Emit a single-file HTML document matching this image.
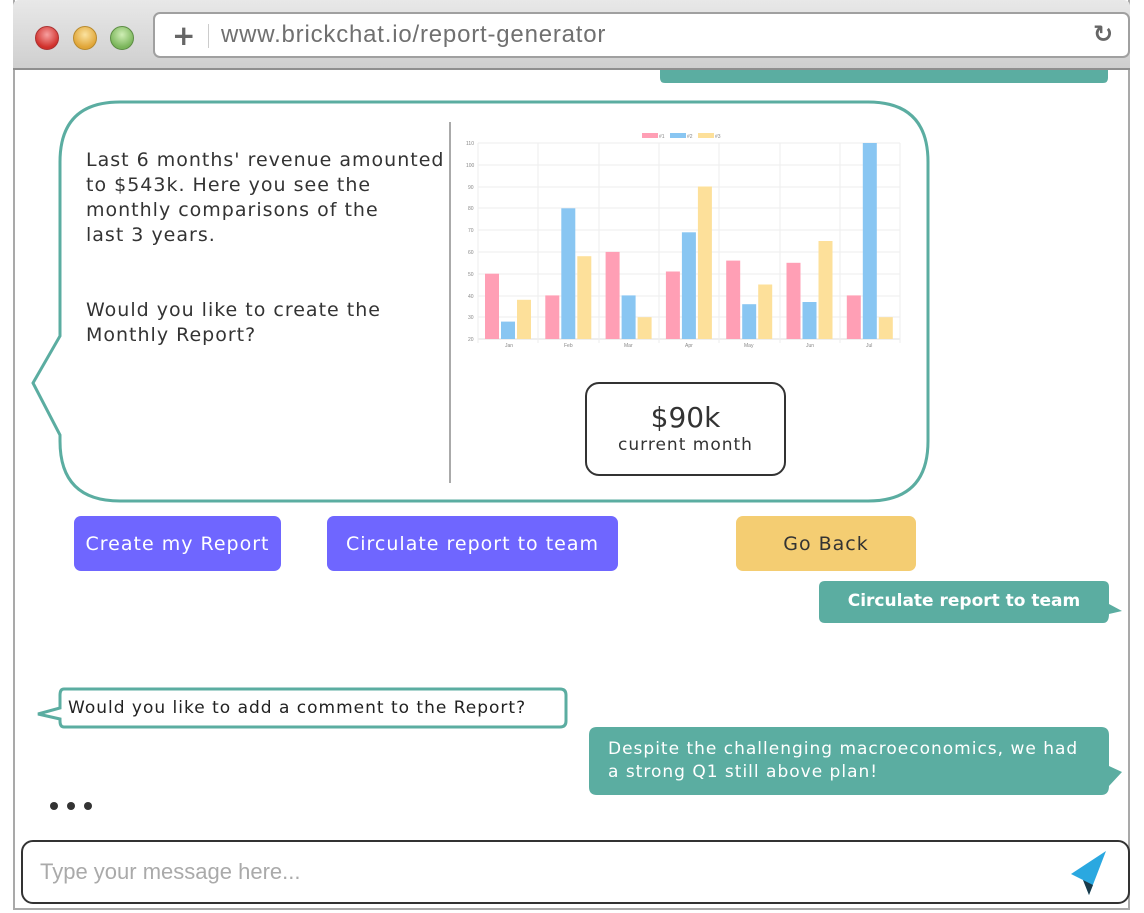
<!DOCTYPE html>
<html><head><meta charset="utf-8"><style>
body{margin:0;width:1144px;height:913px;overflow:hidden;background:#fff;font-family:"DejaVu Sans","Liberation Sans",sans-serif;position:relative}
.a{position:absolute}
.btn{position:absolute;border-radius:7px;color:#fff;font-size:19px;display:flex;align-items:center;justify-content:center;letter-spacing:1px}
</style></head><body>
<div class="a" style="left:13px;top:0;width:1117px;height:910px;border:2px solid #a9a9a9;border-top:none;box-sizing:border-box"></div>
<div class="a" style="left:13px;top:0;width:1117px;height:70px;background:linear-gradient(#e8e8e8,#cfcfcf);border-bottom:2px solid #8f8f8f;box-sizing:border-box;border-radius:6px 6px 0 0"></div>
<div class="a" style="left:35px;top:26px;width:22px;height:22px;border-radius:50%;background:radial-gradient(circle at 50% 35%,#f7a0a0,#d0302b 70%);border:1px solid #a33"></div>
<div class="a" style="left:73px;top:26px;width:22px;height:22px;border-radius:50%;background:radial-gradient(circle at 50% 35%,#fbe3a0,#e0a537 70%);border:1px solid #b88a2e"></div>
<div class="a" style="left:110px;top:26px;width:22px;height:22px;border-radius:50%;background:radial-gradient(circle at 50% 35%,#cfeeb5,#7ab55a 70%);border:1px solid #5d8d45"></div>
<div class="a" style="left:153px;top:12px;width:977px;height:46px;background:#fff;border:2px solid #a0a0a0;border-radius:7px;box-sizing:border-box"></div>
<div class="a" style="left:172px;top:19px;font-size:28px;color:#666;font-weight:bold">+</div>
<div class="a" style="left:208px;top:24px;width:1px;height:24px;background:#ccc"></div>
<div class="a" style="left:221px;top:21px;font-size:24px;letter-spacing:0.8px;color:#707070;font-family:'Liberation Sans',sans-serif">www.brickchat.io/report-generator</div>
<div class="a" style="left:1093px;top:20px;font-size:24px;color:#666;font-weight:bold">↻</div>

<svg class="a" style="left:0;top:0" width="1144" height="913">
<path d="M660 70 H1108 V78 Q1108 83 1103 83 H665 Q660 83 660 78 Z" fill="#5bada1"/>
<path d="M120 102 H868 Q928 102 928 162 V441 Q928 501 868 501 H120 Q60 501 60 441 V435 L33 383 L60 336 V162 Q60 102 120 102 Z" fill="#fff" stroke="#5bada1" stroke-width="3"/>
<line x1="450" y1="122" x2="450" y2="483" stroke="#555" stroke-width="1"/>
<g stroke="#eee" stroke-width="1">
<line x1="478" y1="143" x2="900" y2="143"/><line x1="478" y1="165" x2="900" y2="165"/><line x1="478" y1="187" x2="900" y2="187"/><line x1="478" y1="208" x2="900" y2="208"/><line x1="478" y1="230" x2="900" y2="230"/><line x1="478" y1="252" x2="900" y2="252"/><line x1="478" y1="274" x2="900" y2="274"/><line x1="478" y1="296" x2="900" y2="296"/><line x1="478" y1="317" x2="900" y2="317"/><line x1="478" y1="339" x2="900" y2="339" stroke="#ddd"/>
<line x1="478" y1="143" x2="478" y2="343"/><line x1="538" y1="143" x2="538" y2="343"/><line x1="599" y1="143" x2="599" y2="343"/><line x1="659" y1="143" x2="659" y2="343"/><line x1="719" y1="143" x2="719" y2="343"/><line x1="780" y1="143" x2="780" y2="343"/><line x1="840" y1="143" x2="840" y2="343"/><line x1="900" y1="143" x2="900" y2="343"/>
</g>
<g fill="#ff9fb5">
<rect x="485" y="273.7" width="14" height="65.3"/><rect x="545.3" y="295.4" width="14" height="43.6"/><rect x="605.6" y="251.9" width="14" height="87.1"/><rect x="665.9" y="271.5" width="14" height="67.5"/><rect x="726.2" y="260.6" width="14" height="78.4"/><rect x="786.5" y="262.8" width="14" height="76.2"/><rect x="846.8" y="295.4" width="14" height="43.6"/>
</g>
<g fill="#89c6f2">
<rect x="501" y="321.6" width="14" height="17.4"/><rect x="561.3" y="208.3" width="14" height="130.7"/><rect x="621.6" y="295.4" width="14" height="43.6"/><rect x="681.9" y="232.3" width="14" height="106.7"/><rect x="742.2" y="304.2" width="14" height="34.8"/><rect x="802.5" y="302" width="14" height="37"/><rect x="862.8" y="143" width="14" height="196"/>
</g>
<g fill="#fde09a">
<rect x="517" y="299.8" width="14" height="39.2"/><rect x="577.3" y="256.2" width="14" height="82.8"/><rect x="637.6" y="317.2" width="14" height="21.8"/><rect x="697.9" y="186.5" width="14" height="152.5"/><rect x="758.2" y="284.5" width="14" height="54.5"/><rect x="818.5" y="241" width="14" height="98"/><rect x="878.8" y="317.2" width="14" height="21.8"/>
</g>
<rect x="642" y="133" width="16" height="5" fill="#ff9fb5"/><rect x="670" y="133" width="16" height="5" fill="#89c6f2"/><rect x="698" y="133" width="16" height="5" fill="#fde09a"/>
<g font-size="5" fill="#888" font-family="Liberation Sans">
<text x="659" y="138">#1</text><text x="687" y="138">#2</text><text x="715" y="138">#3</text>
<text x="466" y="145">110</text><text x="466" y="167">100</text><text x="468" y="189">90</text><text x="468" y="210">80</text><text x="468" y="232">70</text><text x="468" y="254">60</text><text x="468" y="276">50</text><text x="468" y="298">40</text><text x="468" y="319">30</text><text x="468" y="341">20</text>
<text x="505" y="347">Jan</text><text x="564" y="347">Feb</text><text x="624" y="347">Mar</text><text x="685" y="347">Apr</text><text x="744" y="347">May</text><text x="806" y="347">Jun</text><text x="866" y="347">Jul</text>
</g>
<path d="M819 587 Q819 581 825 581 H1103 Q1109 581 1109 587 V604 L1122 611 L1109 614 Q1109 623 1103 623 H825 Q819 623 819 617 Z" fill="#5bada1"/>
<path d="M64 689 H560 Q566 689 566 695 V721 Q566 727 560 727 H64 Q60 727 60 721 V719 L38 714 L60 708 V695 Q60 689 64 689 Z" fill="#fff" stroke="#5bada1" stroke-width="3"/>
<path d="M597 727 H1101 Q1109 727 1109 735 V766 L1122 772 L1109 786 Q1109 795 1101 795 H597 Q589 795 589 787 V735 Q589 727 597 727 Z" fill="#5bada1"/>
<circle cx="54" cy="806" r="4" fill="#333"/><circle cx="71" cy="806" r="4" fill="#333"/><circle cx="88" cy="806" r="4" fill="#333"/>
<path d="M1106 851 L1071 874 L1083 880 L1089 895 Z" fill="#2aa8e0"/>
<path d="M1083 880 L1089 895 L1093 885 Z" fill="#1a3a4a"/>
</svg>

<div class="a" style="left:86px;top:148px;font-size:19px;line-height:25px;letter-spacing:1px;color:#333">Last 6 months' revenue amounted<br>to $543k. Here you see the<br>monthly comparisons of the<br>last 3 years.<br><br><br>Would you like to create the<br>Monthly Report?</div>
<div class="a" style="left:585px;top:382px;width:201px;height:94px;border:2px solid #333;border-radius:14px;box-sizing:border-box;text-align:center;color:#333"><div style="font-size:28px;margin-top:18px;line-height:32px">$90k</div><div style="font-size:17px;line-height:22px;letter-spacing:1px">current month</div></div>
<div class="btn" style="left:74px;top:516px;width:207px;height:55px;background:#6f66ff">Create my Report</div>
<div class="btn" style="left:327px;top:516px;width:291px;height:55px;background:#6f66ff">Circulate report to team</div>
<div class="btn" style="left:736px;top:516px;width:180px;height:55px;background:#f4cd72;color:#333">Go Back</div>
<div class="a" style="left:819px;top:591px;width:290px;text-align:center;color:#fff;font-weight:bold;font-size:17px">Circulate report to team</div>
<div class="a" style="left:68px;top:698px;font-size:17px;letter-spacing:1px;color:#222">Would you like to add a comment to the Report?</div>
<div class="a" style="left:608px;top:738px;font-size:17px;line-height:23px;letter-spacing:1px;color:#fff">Despite the challenging macroeconomics, we had<br>a strong Q1 still above plan!</div>
<div class="a" style="left:21px;top:840px;width:1109px;height:64px;border:2px solid #333;border-radius:12px;box-sizing:border-box"></div>
<div class="a" style="left:40px;top:859px;font-size:22px;color:#aaa;font-family:'Liberation Sans',sans-serif">Type your message here...</div>
</body></html>
